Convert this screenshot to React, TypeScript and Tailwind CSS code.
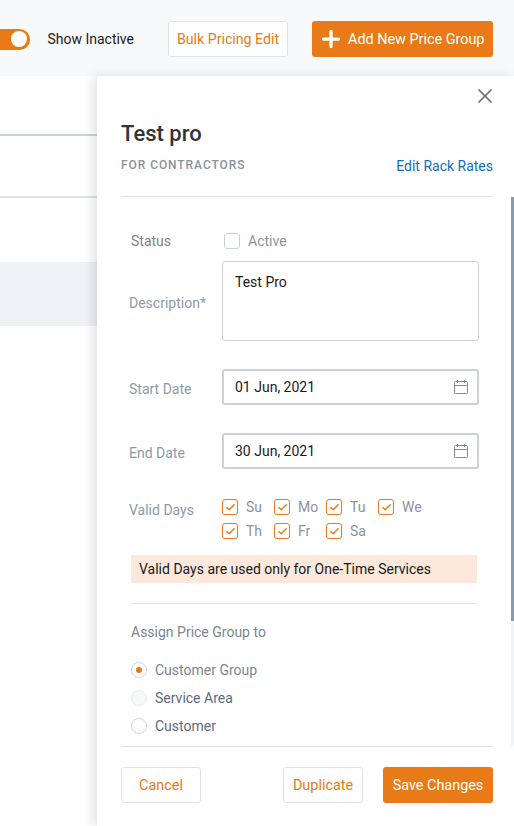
import { Check, Plus, X } from 'lucide-react';

const DAYS_ROW_1 = ['Su', 'Mo', 'Tu', 'We'];
const DAYS_ROW_2 = ['Th', 'Fr', 'Sa'];

const DayCheck = ({ label }: { label: string }) => (
  <div className="flex w-[52px] items-center">
    <span className="flex h-4 w-4 items-center justify-center rounded-[3px] border border-[#e87a17] bg-white">
      <Check size={11} strokeWidth={3} className="text-[#e87a17]" />
    </span>
    <span className="ml-2 text-sm leading-4 text-[#8b939d]">{label}</span>
  </div>
);

const Radio = ({ label, state }: { label: string; state: 'on' | 'disabled' | 'off' }) => (
  <div className="flex h-7 items-center">
    <span
      className={`flex h-4 w-4 items-center justify-center rounded-full border border-[#ced6e0] ${
        state === 'disabled' ? 'border-[#e6eaef] bg-[#f6f8fa]' : 'bg-white'
      }`}
    >
      {state === 'on' && <span className="h-1.5 w-1.5 rounded-full bg-[#e87a17]" />}
    </span>
    <span className={`ml-2 text-sm ${state === 'on' ? 'text-[#7d858f]' : 'text-[#5c6b7d]'}`}>{label}</span>
  </div>
);

const CalendarIcon = () => (
  <svg width="16" height="16" viewBox="0 0 16 16" fill="none" stroke="#7e8d9d" strokeWidth="1">
    <rect x="1.5" y="2.5" width="13" height="12" rx="1" />
    <path d="M1.5 6.5h13M4.5 1v3M11.5 1v3" />
  </svg>
);

const DateField = ({ label, value, className }: { label: string; value: string; className: string }) => (
  <div className={`flex items-center ${className}`}>
    <span className="w-[93px] pt-1 text-sm text-[#8d9aaa]">{label}</span>
    <div className="flex h-9 w-[257px] items-center justify-between rounded-[3px] border-2 border-[#c9d2dc] pl-[11px] pr-[8px] text-sm text-[#1a1a1a]">
      {value}
      <CalendarIcon />
    </div>
  </div>
);

export default function App() {
  return (
    <div className="relative h-[826px] w-[514px] overflow-hidden bg-white font-['Roboto',sans-serif]">
      {/* top bar */}
      <div className="flex h-[76px] items-center justify-end overflow-hidden bg-[#f8f9fb] pr-[21px] pt-[2px]">
        <div className="flex w-[30px] shrink-0 items-center justify-end self-center">
          <div className="flex h-[21px] w-[50px] shrink-0 items-center justify-end rounded-full bg-[#e87a17] pr-[3px]">
            <span className="h-[16px] w-[16px] rounded-full bg-white" />
          </div>
        </div>
        <span className="ml-[17px] text-sm text-[#1a1a1a]">Show Inactive</span>
        <button className="ml-[34px] h-9 w-[120px] rounded-[3px] border border-[#dfe3e8] bg-white pt-[2px] text-[14.2px] text-[#e87a17]">
          Bulk Pricing Edit
        </button>
        <button className="ml-6 flex h-9 w-[181px] items-center rounded-[3px] bg-[#e87a17] pl-[6px] text-[14.4px] text-white">
          <Plus size={26} strokeWidth={3} />
          <span className="ml-1 pt-[2px]">Add New Price Group</span>
        </button>
      </div>

      {/* table behind the panel */}
      <div className="h-[60px] border-b-2 border-[#c9d2dc]" />
      <div className="h-[62px] border-b-2 border-[#dfe3e8]" />
      <div className="mt-[64px] h-[64px] bg-[#eef1f5]" />

      {/* side panel */}
      <div className="absolute bottom-0 left-[97px] right-0 top-[76px] flex flex-col bg-white shadow-[-4px_0_10px_rgba(40,50,60,0.14)]">
        <div className="pl-6 pr-[21px]">
          <div className="flex justify-end pt-2">
            <X size={24} strokeWidth={1.75} className="-mr-1 text-[#66717d]" />
          </div>
          <h1 className="mt-3 text-[22px] font-medium leading-7 text-[#333333]">Test pro</h1>
          <div className="mt-[9px] flex items-center justify-between border-b border-[#dfe3e8] pb-[23px]">
            <span className="text-xs font-medium leading-4 tracking-[0.93px] text-[#8a929c]">FOR CONTRACTORS</span>
            <a className="translate-y-[1px] text-sm leading-4 text-[#0f6fb8]">Edit Rack Rates</a>
          </div>
        </div>

        <div className="relative flex-1 px-[34px] pt-[36px]">
          {/* scrollbar */}
          <div className="absolute bottom-0 right-0 top-0 w-[3px] bg-[#f3f4f6]">
            <div className="h-[424px] bg-[#8e9bab]" />
          </div>

          <div className="flex h-4 items-center">
            <span className="w-[93px] text-sm text-[#7d858f]">Status</span>
            <span className="h-4 w-4 rounded-[3px] border border-[#c9d2dc] bg-white" />
            <span className="ml-2 text-sm text-[#8b939d]">Active</span>
          </div>

          <div className="mt-3 flex items-center">
            <span className="-ml-[2px] w-[93px] pt-1 text-sm text-[#8d9aaa]">Description*</span>
            <div className="h-20 w-[257px] rounded-[3px] border border-[#c9d2dc] px-3 py-[11px] text-sm leading-[18px] text-[#1a1a1a]">
              Test Pro
            </div>
          </div>

          <DateField label="Start Date" value="01 Jun, 2021" className="-ml-[2px] mt-7" />
          <DateField label="End Date" value="30 Jun, 2021" className="-ml-[2px] mt-7" />

          <div className="-ml-[2px] mt-[30px] flex">
            <span className="w-[93px] pt-[1px] text-sm leading-5 text-[#8d9aaa]">Valid Days</span>
            <div className="flex flex-col gap-2">
              <div className="flex">
                {DAYS_ROW_1.map((d) => (
                  <DayCheck key={d} label={d} />
                ))}
              </div>
              <div className="flex">
                {DAYS_ROW_2.map((d) => (
                  <DayCheck key={d} label={d} />
                ))}
              </div>
            </div>
          </div>

          <div className="mt-4 flex h-7 w-[346px] items-center bg-[#fce9dc] pl-2 text-sm text-[#1a1a1a]">
            Valid Days are used only for One-Time Services
          </div>

          <div className="mt-5 w-[346px] border-t border-[#dfe3e8]" />
          <div className="mt-[18px] text-sm leading-[20px] text-[#7d858f]">Assign Price Group to</div>

          <div className="mt-[14px]">
            <Radio label="Customer Group" state="on" />
            <Radio label="Service Area" state="disabled" />
            <Radio label="Customer" state="off" />
          </div>
        </div>

        <div className="ml-6 mr-[21px] flex h-20 items-start justify-between border-t border-[#dfe3e8] pt-5">
          <button className="h-9 w-20 rounded-[3px] border border-[#dfe3e8] bg-white pt-[2px] text-[14.4px] text-[#e87a17]">Cancel</button>
          <div className="flex gap-5">
            <button className="h-9 w-20 rounded-[3px] border border-[#dfe3e8] bg-white pt-[2px] text-[14.4px] text-[#e87a17]">Duplicate</button>
            <button className="h-9 w-[110px] rounded-[3px] bg-[#e87a17] pt-[2px] text-[14.4px] text-white">Save Changes</button>
          </div>
        </div>
      </div>
    </div>
  );
}
